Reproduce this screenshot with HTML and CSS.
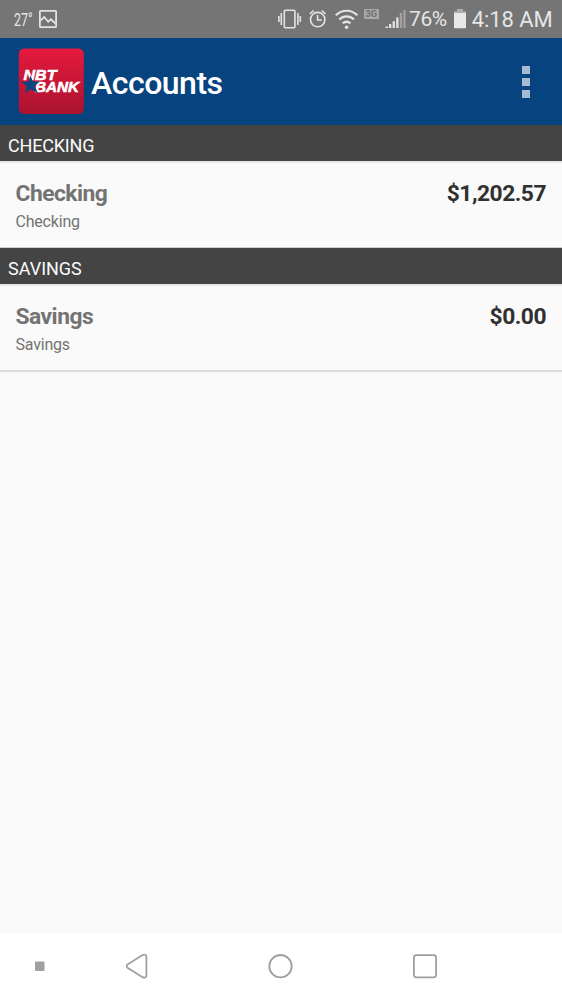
FILE: index.html
```html
<!DOCTYPE html>
<html lang="en">
<head>
<meta charset="utf-8">
<title>Accounts</title>
<link rel="stylesheet" href="styles.css">
</head>
<body>
<div class="status">
  <span class="temp">27°</span>
  <svg class="photo" width="18" height="18" viewBox="0 0 18 18" fill="none" stroke="#e2e2e2" stroke-width="1.8"><rect x=".9" y=".9" width="16.200" height="16.200" rx=".6"/><path d="M1.500 10.500L5.200 7l4 4.800 2.600-2.500 4.700 4.200"/></svg>
  <svg class="system" width="130" height="26" viewBox="0 0 130 26" fill="none" stroke="#e4e4e4" stroke-width="1.6">
    <rect x="6.300" y="4.300" width="10.600" height="17.400" rx="1"/>
    <path d="M3.300 7v12M.9 10v6M19.900 7v12M22.300 10v6"/>
    <circle cx="39.700" cy="13.600" r="7.200"/><path d="M39.600 9v5h4.300M31.800 7.800l4-3.300M47.600 7.800l-4-3.300"/>
    <g stroke-width="2.2"><path d="M57.800 9.300C64 3.200 73.200 3.200 79.400 9.300M61.300 13.400c4.300-4.100 10.300-4.100 14.600 0M64.800 17.400c2.300-2 5.300-2 7.600 0"/></g>
    <circle cx="68.600" cy="21.200" r="1.8" fill="#e4e4e4" stroke="none"/>
    <rect x="86" y="3" width="15" height="10" rx="1" fill="#aaa" stroke="none"/>
    <text class="network" x="87.600" y="11" textLength="11.500" lengthAdjust="spacingAndGlyphs">3G</text>
    <g stroke="none"><path d="M107.500 20.500h2.500V22h-2.500zM111 18h2.300v4h-2.300zM114.600 15.200h2.300V22h-2.300zM118.200 11.500h2.300V22h-2.300z" fill="#e4e4e4"/><path d="M121.800 7h2.400v15h-2.400zM125.400 4h2.200v18h-2.200z" fill="#a2a2a2"/></g>
  </svg>
  <span class="percent">76%</span>
  <svg class="battery" width="12" height="20" viewBox="0 0 12 20"><path d="M3 0h6v2.200h3V5H0V2.200h3z" fill="#adadad"/><path d="M0 4h12v14.500q0 .8-.8.8H.8Q0 19.300 0 18.500z" fill="#e8e8e8"/></svg>
  <span class="clock">4:18 AM</span>
</div>
<header class="bar">
  <svg class="logo" width="66" height="67" viewBox="0 0 66 67">
    <defs><linearGradient id="red" x2="0" y2="1"><stop stop-color="#e6193e"/><stop offset="1" stop-color="#aa132e"/></linearGradient></defs>
    <rect x=".8" y=".5" width="65" height="65.500" rx="5.500" fill="url(#red)"/>
    <text class="brand" x="5.500" y="32.300" textLength="33" lengthAdjust="spacingAndGlyphs">NBT</text>
    <text class="brand" x="17" y="44.300" textLength="44" lengthAdjust="spacingAndGlyphs">BANK</text>
    <path d="M12.500 27.500l2.300 6 7.200.1-5.400 4.400 3.600 7.500-7.300-4.400-6 4.500 2-7.300-5.900-4.600h7.300z" fill="#0a467f"/>
  </svg>
  <h1>Accounts</h1>
  <div class="more"><i></i><i></i><i></i></div>
</header>
<main>
  <h2>CHECKING</h2>
  <section class="account">
    <div><h3>Checking</h3><p>Checking</p></div>
    <strong>$1,202.57</strong>
  </section>
  <h2 class="savings">SAVINGS</h2>
  <section class="account last">
    <div><h3>Savings</h3><p>Savings</p></div>
    <strong>$0.00</strong>
  </section>
</main>
<nav>
  <svg width="562" height="66" viewBox="0 0 562 66" fill="none" stroke="#a0a0a0" stroke-width="1.800">
    <rect x="35" y="28.500" width="9.500" height="9.500" rx="1" fill="#a0a0a0" stroke="none"/>
    <path d="M127.500 31.500L142.500 22q3.700-1.500 3.900 1.800v18.600q-.2 3.300-3.900 1.800L127.500 34.800q-1.700-1.600 0-3.300z"/>
    <circle cx="280.500" cy="33.200" r="11.200"/>
    <rect x="413.900" y="22.100" width="22.200" height="22.200" rx="2.500"/>
  </svg>
</nav>
</body>
</html>
```
FILE: styles.css
```css
* { box-sizing: border-box; margin: 0; padding: 0; }
body { width: 562px; height: 999px; display: flex; flex-direction: column; overflow: hidden; background: #fafafa; font-family: Roboto, sans-serif; }
svg { display: block; flex: none; }
.status { height: 37.5px; flex: none; display: flex; align-items: center; padding: 1px 10px 0 14px; background: #757575; color: #e6e6e6; white-space: nowrap; }
.temp { width: 25px; font-size: 18px; transform: scaleX(.69); transform-origin: left; }
.system { margin-left: 221px; }
.network { font: bold 9px Roboto, sans-serif; fill: #707070; stroke: none; }
.percent { width: 38px; margin-left: 1px; font-size: 21px; letter-spacing: -.4px; }
.battery { margin-left: 7px; }
.clock { margin-left: 6px; font-size: 22px; letter-spacing: -.1px; }
.bar { height: 87.5px; flex: none; display: flex; align-items: center; padding: 0 32px 0 18px; background: #07447f; }
.brand { font: italic 700 15.5px "Liberation Sans", sans-serif; fill: #fff; stroke: #fff; stroke-width: .6; }
h1 { margin: 3px 0 0 7px; color: #fff; font-size: 32px; line-height: 40px; font-weight: 500; letter-spacing: -.5px; }
.more { margin: 2px 0 0 auto; display: grid; gap: 4px; }
.more i { display: block; width: 8px; height: 8px; background: #a5bbd1; }
main { flex: 1; }
h2 { height: 36px; padding: 10px 8px 0; background: #444; color: #fafafa; font-size: 18px; line-height: 22px; font-weight: 400; letter-spacing: -.2px; }
.savings { letter-spacing: 0; }
.account { height: 87px; display: flex; justify-content: space-between; padding: 19px 16px 0 15.5px; border-top: 2px solid #e8e8e8; border-bottom: 1px solid #d0d0d0; }
.last { height: 88px; border-bottom: 2px solid #dcdcdc; }
h3, strong { font-size: 22.8px; line-height: 24px; font-weight: 700; letter-spacing: -.5px; }
h3 { color: #737373; }
strong { color: #303030; }
p { margin-top: 6px; color: #737373; font-size: 16px; line-height: 20px; letter-spacing: -.2px; }
nav { height: 66px; flex: none; background: #fff; }
```
